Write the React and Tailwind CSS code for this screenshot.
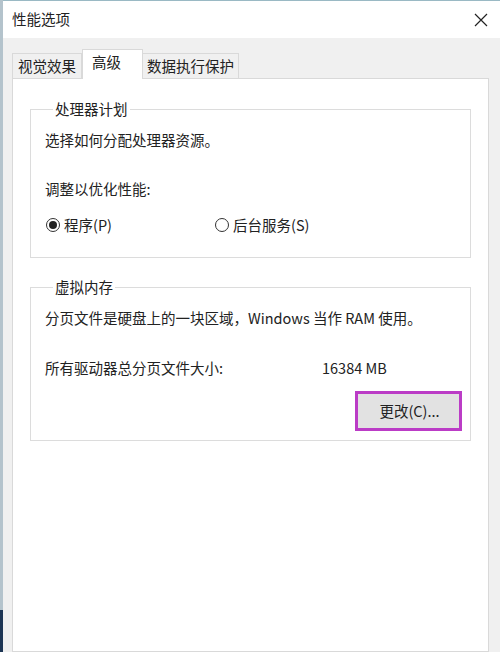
import React from "react";

const font = { fontFamily: '"Noto Sans CJK SC", "Noto Sans", sans-serif' };

function Radio({ checked, label, className = "" }) {
  return (
    <div className={`flex items-center ${className}`}>
      <span className="w-[14px] h-[14px] rounded-full border border-[#333] bg-white flex items-center justify-center">
        {checked && <span className="w-[8px] h-[8px] rounded-full bg-[#222]" />}
      </span>
      <span className="ml-[4px]">{label}</span>
    </div>
  );
}

export default function App() {
  return (
    <div
      className="w-[500px] h-[652px] overflow-hidden flex bg-[#f0f0f0] text-[14.5px] leading-[20px] text-[#222]"
      style={font}
    >
      {/* window left edge */}
      <div className="w-[3px] flex flex-col">
        <div className="flex-1 bg-[#b4c3cc]" />
        <div className="h-[42px] bg-[#1d3554]" />
      </div>

      <div className="flex-1 flex flex-col">
        {/* title bar */}
        <div className="h-[38px] bg-white border-t border-[#9ab9c4] flex items-center justify-between pl-[9px] pr-[11px]">
          <span className="-mt-[2px]">性能选项</span>
          <svg width="14" height="14" viewBox="0 0 14 14" className="mr-[1px]">
            <path d="M1 1 L13 13 M13 1 L1 13" stroke="#222" strokeWidth="1.2" fill="none" />
          </svg>
        </div>

        {/* body */}
        <div className="flex-1 flex flex-col pl-[9px] pr-[11px] pt-[11px]">
          {/* tabs */}
          <div className="flex items-end h-[29px] relative z-10">
            <div className="w-[70px] h-[25px] border border-[#d9d9d9] border-b-0 bg-[#f0f0f0] flex items-center justify-center">
              视觉效果
            </div>
            <div className="w-[61px] h-[30px] -mb-[1px] border border-[#d9d9d9] border-b-0 bg-white flex items-start pt-[2px] pl-[9px]">
              高级
            </div>
            <div className="w-[96px] h-[25px] border border-[#d9d9d9] border-b-0 border-l-0 bg-[#f0f0f0] flex items-center justify-center">
              数据执行保护
            </div>
          </div>

          {/* panel */}
          <div className="flex-1 bg-white border border-[#d9d9d9] px-[17px] pt-[20px]">
            <fieldset className="border border-[#dcdcdc] pl-[14px] pr-[8px] pb-[22px]">
              <legend className="ml-[8px] px-[2px]">处理器计划</legend>
              <div className="mt-[11px]">选择如何分配处理器资源。</div>
              <div className="mt-[29px]">调整以优化性能:</div>
              <div className="mt-[16px] flex">
                <Radio checked label="程序(P)" className="w-[170px] pl-[1px]" />
                <Radio label="后台服务(S)" />
              </div>
            </fieldset>

            <fieldset className="mt-[19px] border border-[#dcdcdc] pl-[14px] pr-[8px] pb-[9px]">
              <legend className="ml-[8px] px-[2px]">虚拟内存</legend>
              <div className="mt-[11px]">分页文件是硬盘上的一块区域，Windows 当作 RAM 使用。</div>
              <div className="mt-[30px] flex">
                <span className="w-[277px]">所有驱动器总分页文件大小:</span>
                <span>16384 MB</span>
              </div>
              <div className="mt-[13px] flex justify-end">
                <div className="w-[107px] h-[40px] border-[3px] border-[#bb3cc6] bg-[#e2e2e2] flex items-center justify-center">
                  <span className="pl-[2px]">更改(C)...</span>
                </div>
              </div>
            </fieldset>
          </div>
        </div>
      </div>
    </div>
  );
}
